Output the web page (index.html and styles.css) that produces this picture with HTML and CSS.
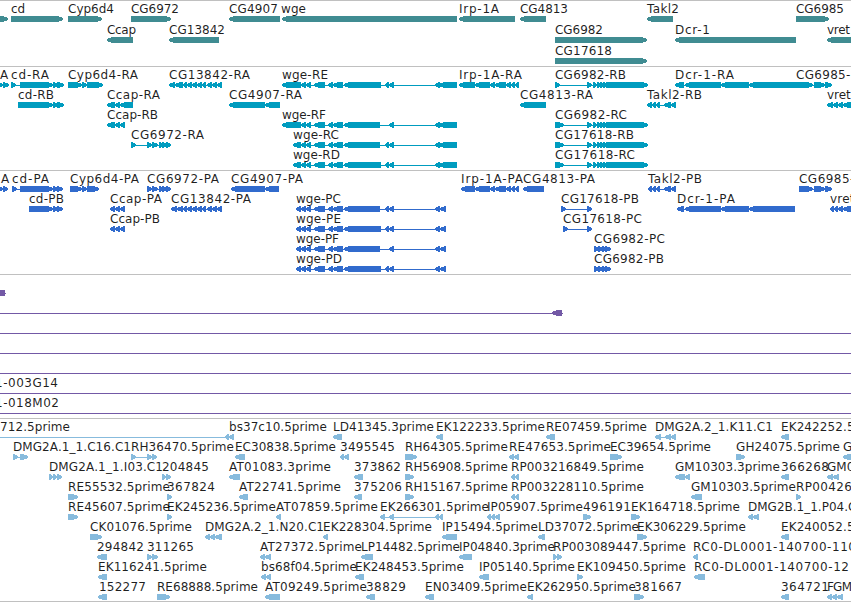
FILE: index.html
```
<!DOCTYPE html>
<html lang="en">
<head>
<meta charset="utf-8">
<title>Genome tracks</title>
<link rel="stylesheet" href="styles.css">
</head>
<body>
<main class="tracks">
<section class="track genes" id="genes"></section>
<section class="track transcripts" id="transcripts"></section>
<section class="track proteins" id="proteins"></section>
<section class="track clones" id="clones"></section>
<section class="track ests" id="ests"></section>
</main>
<script src="tracks.js"></script>
</body>
</html>
```
FILE: styles.css
```
body {
  margin: 0;
  background: #fff;
  overflow: hidden;
}

.tracks {
  display: flex;
  flex-direction: column;
  height: 602px;
  overflow: hidden;
}

.track {
  box-sizing: border-box;
  flex: none;
  border-top: 1px solid #c0c0c0;
  overflow: hidden;
}

.row {
  display: block;
  width: 851px;
  height: 20px;
  overflow: visible;
  fill: currentColor;
  shape-rendering: crispEdges;
}

.genes .row {
  height: 21px;
}

.label {
  font: 12px "DejaVu Sans", sans-serif;
  fill: #000;
  fill-opacity: 0.88;
  white-space: pre;
}

.genes {
  height: 66px;
  color: #408c92;
}

.transcripts {
  height: 104px;
  color: #009cbf;
}

.proteins {
  height: 104px;
  color: #316bcd;
}

.clones {
  height: 144px;
  color: #7359a6;
}

.ests {
  height: 184px;
  color: #87bbdd;
  border-bottom: 1px solid #c0c0c0;
}
```
FILE: tracks.js
```
// Each feature: label | label start | label end | strand | exon ranges
const wgeMid = '301-306 306-311 314-325 328-333 333-343';
const wgeEnd = '385-389 389-394 435-440 439-457';
const wgeCds = '385-389 389-394 435-440 440-446';
const exons6982 = '587-592 593-597 597-601 600-604 603-607 606-648';
const cg13842 = '183-187 187-192 192-197 197-202 202-206 207-212 212-217 217-222';

const data = {
  genes: [
    ['|0|0|>|-9-8', 'cd|11|25|>|11-63', 'Cyp6d4|68|114|>|68-102', 'CG6972|131|179|>|131-171',
      'CG4907|229|278|<|229-280', 'wge|281|306|<|282-457', 'Irp-1A|459|499|<|459-515',
      'CG4813|520|568|<|520-546', 'Takl2|647|679|<|647-673', 'CG6985|796|844|>|796-829'],
    ['Ccap|107|136|<|107-133', 'CG13842|169|225|<|169-219', 'CG6982|555|603|>|555-647',
      'Dcr-1|675|710|<|675-796', 'vret|827|850|<|827-860'],
    ['CG17618|555|612|>|555-647']
  ],
  transcripts: [
    ['A|0|9|>|-3-3 3-9', 'cd-RA|11|49|>|11-16 20-53 53-58 57-64', 'Cyp6d4-RA|68|138|>|68-82 82-87 87-103',
      'CG13842-RA|169|250|<|169-175 175-183 ' + cg13842,
      'wge-RE|282|328|<|282-301 ' + wgeMid + ' 344-381 ' + wgeEnd,
      'Irp-1A-RA|459|522|<|459-475 475-490 490-495 495-506 506-511 511-515 515-519',
      'CG6982-RB|555|626|>|555-560 ' + exons6982, 'Dcr-1-RA|675|734|<|675-684 685-721 721-749 749-796',
      'CG6985-RA|796|867|>|796-813 814-825 825-832'],
    ['cd-RB|18|54|>|18-53 53-58 57-64', 'Ccap-RA|107|160|<|107-115 115-120 120-133',
      'CG4907-RA|229|302|<|229-265 265-280', 'CG4813-RA|520|593|<|520-546',
      'Takl2-RB|647|702|<|647-652 652-656 656-660 664-671 671-676', 'vret-RA|827|871|<|827-833 833-838 838-843 843-860'],
    ['Ccap-RB|107|158|<|107-115 115-120 120-125', 'wge-RF|282|326|<|282-301 ' + wgeMid + ' 344-380 389-394 435-440 439-457',
      'CG6982-RC|555|627|>|555-564 ' + exons6982],
    ['CG6972-RA|131|204|>|131-136 147-152 152-158 159-163 162-167 166-171',
      'wge-RC|293|339|<|293-301 ' + wgeMid + ' 344-380 ' + wgeEnd, 'CG17618-RB|555|634|>|555-564 ' + exons6982],
    ['wge-RD|293|340|<|293-301 ' + wgeMid + ' 344-381 ' + wgeEnd, 'CG17618-RC|555|635|>|555-564 ' + exons6982]
  ],
  proteins: [
    ['A|1|10|>|-3-3 3-8', 'cd-PA|12|49|>|12-17 20-53 53-58 57-63', 'Cyp6d4-PA|70|139|>|70-82 82-87 87-99',
      'CG6972-PA|147|219|>|147-152 152-158 159-163 162-167 166-171', 'CG4907-PA|231|303|<|231-265 265-279',
      'Irp-1A-PA|461|523|<|461-475 475-490 490-495 495-506 506-511 511-515 515-519',
      'CG4813-PA|523|595|<|523-544', 'Takl2-PB|648|702|<|648-652 652-656 656-660 664-671 671-676',
      'CG6985-PA|799|870|>|799-813 814-825 825-832'],
    ['cd-PB|29|64|>|29-53 53-58 57-63', 'Ccap-PA|110|162|<|110-115 115-120 120-125',
      'CG13842-PA|171|251|<|171-177 177-183 ' + cg13842,
      'wge-PC|296|341|<|296-301 ' + wgeMid + ' 344-380 ' + wgeCds, 'CG17618-PB|561|639|>|561-566 587-592',
      'Dcr-1-PA|677|735|<|677-684 685-721 721-749 749-795', 'vret-PA|830|874|<|830-834 834-838 838-843 843-860'],
    ['Ccap-PB|110|160|<|110-115 115-120 120-125', 'wge-PE|296|341|<|296-301 ' + wgeMid + ' 344-381 ' + wgeCds,
      'CG17618-PC|563|642|>|563-568 587-592'],
    ['wge-PF|296|339|<|296-301 ' + wgeMid + ' 344-380 389-394 435-440 440-446', 'CG6982-PC|594|665|>|594-599 598-603 602-606 605-611'],
    ['wge-PD|296|342|<|296-301 ' + wgeMid + ' 344-381 ' + wgeCds, 'CG6982-PB|594|664|>|594-599 598-603 602-606 605-611']
  ],
  clones: [
    ['|0|0|=|-9-5 5-6'], ['|0|0|<|-9--9 552-562 563-563'], ['|0|0|<|-9--9 860-860'], ['|0|0|<|-9--9 860-860'],
    ['|0|0|<|-9--9 860-860'], ['1-003G14|-5|58|<|-9--9 860-860'], ['1-018M02|-5|59|<|-9--9 860-860']
  ],
  ests: [
    ['712.5prime|0|70|<|-9--9 225-229 229-234', 'bs37c10.5prime|229|327|<|229-234', 'LD41345.3prime|333|434|<|333-342',
      'EK122233.5prime|436|545|<|436-443', 'RE07459.5prime|546|647|<|546-555',
      'DMG2A.2_1.K11.C1|655|773|<|655-661 665-671 671-676', 'EK242252.5prime|781|890|<|781-789'],
    ['DMG2A.1_1.C16.C1|13|131|>|13-18 20-28', 'RH36470.5prime|131|234|>|131-136 147-152 152-157',
      'EC30838.5prime|235|336|<|235-245', '3495545|340|395|<|340-344 344-349', 'RH64305.5prime|405|508|>|405-417',
      'RE47653.5prime|509|611|<|509-514 514-519', 'EC39654.5prime|610|711|>|610-622',
      'GH24075.5prime|736|840|>|736-745', 'G|843|852|<|843-860'],
    ['DMG2A.1_1.I03.C1|49|163|>|49-53 53-57 57-62', '204845|162|209|>|162-166 166-171', 'AT01083.3prime|229|331|<|229-240',
      '373862|354|401|<|354-363', 'RH56908.5prime|405|508|>|405-414', 'RP003216849.5prime|511|644|<|511-515 515-519',
      'GM10303.3prime|675|780|<|675-685 685-690', '366268|781|829|<|781-789', 'GM06|827|862|<|827-833 833-839'],
    ['RE55532.5prime|68|170|>|68-78', '367824|167|215|>|167-172', 'AT22741.5prime|239|341|<|239-248',
      '375206|354|402|<|354-362', 'RH15167.5prime|405|508|>|405-414', 'RP003228110.5prime|511|644|<|511-515 515-519',
      'GM10303.5prime|691|796|<|691-702', 'RP00426|796|852|>|796-801'],
    ['RE45607.5prime|68|170|>|68-78', 'EK245236.5prime|167|276|>|167-172', 'AT07859.5prime|276|378|<|276-281',
      'EK266301.5prime|380|489|<|380-385 389-394 435-439 439-443', 'IP05907.5prime|487|583|<|487-491 491-495 495-500',
      '496191|583|631|>|583-591', 'EK164718.5prime|631|740|>|631-640', 'DMG2B.1_1.P04.C1|748|864|<|748-753 753-759'],
    ['CK01076.5prime|90|192|>|90-102', 'DMG2A.2_1.N20.C1|205|324|<|205-210 210-215 215-222',
      'EK228304.5prime|323|432|<|323-328', 'IP15494.5prime|442|538|<|442-457', 'LD37072.5prime|538|639|<|538-545',
      'EK306229.5prime|637|746|>|637-647', 'EK240052.5prime|781|890|<|781-789'],
    ['294842|97|144|<|97-107', '311265|147|194|>|147-152 152-158', 'AT27372.5prime|260|362|<|260-265 265-271',
      'LP14482.5prime|361|460|<|361-373', 'IP04840.3prime|459|555|<|459-472', 'RP003089447.5prime|553|686|>|553-557 557-562',
      'RC0-DL0001-140700-110|693|856|<|693-698'],
    ['EK116241.5prime|98|207|<|98-107', 'bs68f04.5prime|261|357|<|261-266 266-271', 'EK248453.5prime|355|464|<|355-364',
      'IP05140.5prime|479|575|<|479-489', 'EK109450.5prime|577|686|>|577-583', 'RC0-DL0001-140700-12|694|849|<|694-705'],
    ['152277|99|146|<|98-107', 'RE68888.5prime|157|258|>|157-170', 'AT09249.5prime|265|367|<|265-280',
      '38829|366|406|<|366-375', 'EN03409.5prime|425|527|<|425-434', 'EK262950.5prime|527|636|<|527-533',
      '381667|634|682|>|634-644', '364721|781|829|<|781-789', 'FGM|827|852|<|827-832 832-837 837-843']
  ]
};

const NS = 'http://www.w3.org/2000/svg';
const TOP = 15, MID = 18, BOTTOM = 21, HEAD = 5;

function add(parent, name, attrs) {
  const el = document.createElementNS(NS, name);
  for (const key in attrs) el.setAttribute(key, attrs[key]);
  parent.appendChild(el);
  return el;
}

function exonPath(a, b, strand) {
  const head = Math.min(HEAD, b - a - 1);
  if (strand === '=' || a === b) return `M${a} ${TOP}H${b}V${a === b ? TOP : BOTTOM}H${a}Z`;
  const tip = strand === '<' ? a : b;
  const neck = strand === '<' ? a + head : b - head;
  const tail = strand === '<' ? b : a;
  return `M${tip} ${MID - 1}L${neck} ${TOP}H${tail}V${BOTTOM}H${neck}L${tip} ${MID + 1}Z`;
}

for (const id in data) {
  for (const features of data[id]) {
    const svg = add(document.getElementById(id), 'svg', { class: 'row' });
    for (const feature of features) {
      const [label, x, end, strand, ranges] = feature.split('|');
      const exons = ranges.split(' ').map(r => r.match(/^(-?\d+)-(-?\d+)$/).slice(1).map(Number));
      const first = exons[0][0], last = exons[exons.length - 1][1];
      if (exons.length > 1) add(svg, 'rect', { x: first, y: MID, width: last - first, height: 1 });
      const shown = strand === '=' ? exons.slice(0, 1) : exons;
      add(svg, 'path', { d: shown.map(([a, b]) => exonPath(a, b, strand)).join('') });
      if (label) {
        const text = add(svg, 'text', { class: 'label', x, y: 12, textLength: end - x });
        text.textContent = label;
      }
    }
  }
}
```
